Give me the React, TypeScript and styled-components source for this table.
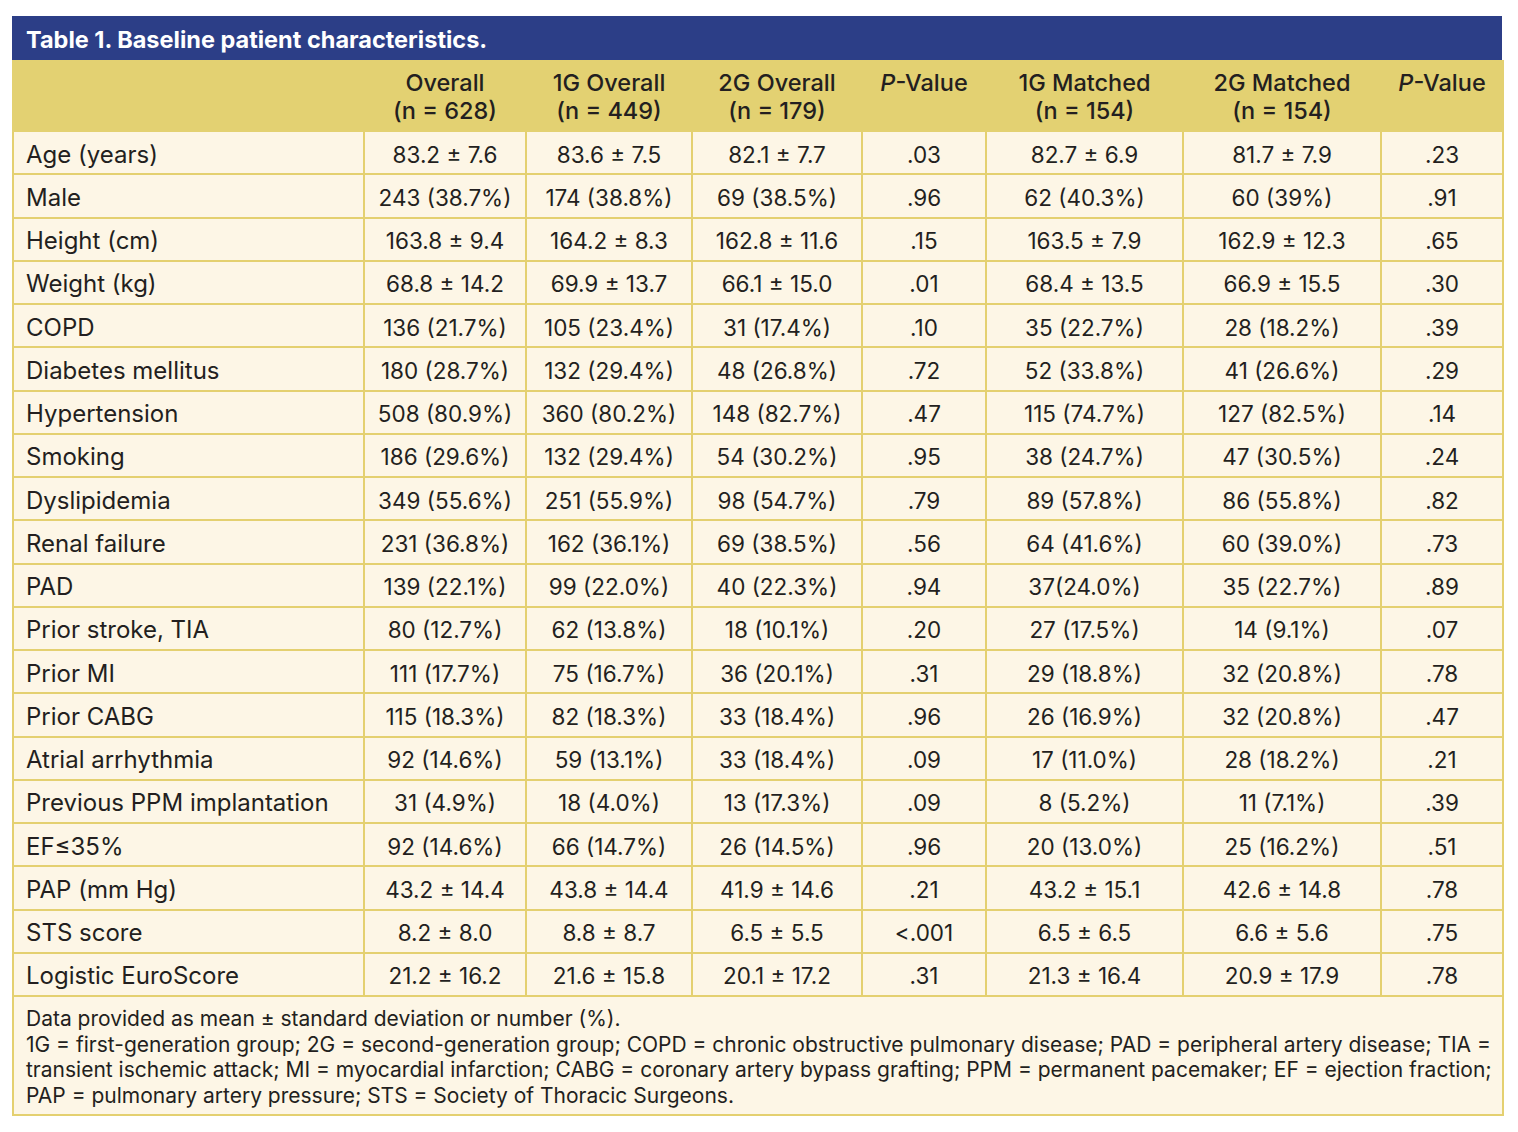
import React from 'react';
import styled, { createGlobalStyle } from 'styled-components';

const GlobalStyle = createGlobalStyle`
  body {
    margin: 0;
    background: #ffffff;
    font-family: Inter, Roboto, "Liberation Sans", sans-serif;
    color: #231f20;
  }
`;

const Page = styled.div`
  padding: 16px 16px 18px 12px;
`;

const Frame = styled.div`
  width: 1490px;
`;

const TitleBar = styled.div`
  height: 44px;
  background: #2c3e87;
  color: #ffffff;
  font-size: 23.5px;
  font-weight: 650;
  display: flex;
  align-items: center;
  padding: 3px 14px 0;
  box-sizing: border-box;
`;

const Table = styled.table`
  width: 100%;
  border-collapse: collapse;
  table-layout: fixed;
  background: #fdf6e6;
`;

const HeadCell = styled.th`
  background: #e3d172;
  height: 61px;
  padding: 9px 4px 0;
  font-size: 23.5px;
  font-weight: 500;
  line-height: 28px;
  text-align: center;
  vertical-align: top;
  white-space: nowrap;
  border: 2px solid #e3d172;
  border-top: none;
`;

const Cell = styled.td<{ $label?: boolean }>`
  height: 38.25px;
  padding: 3px ${(p) => (p.$label ? '12px' : '4px')} 0;
  font-size: ${(p) => (p.$label ? '24px' : '22.5px')};
  text-align: ${(p) => (p.$label ? 'left' : 'center')};
  white-space: nowrap;
  border: 2px solid #e4d070;
`;

const Notes = styled.td`
  border: 2px solid #e4d070;
  padding: 9px 12px 6px;
  font-size: 21px;
  line-height: 25.5px;
  white-space: nowrap;
`;

const cols = [351, 162, 166, 170, 124, 197, 198, 122];

const rows: string[][] = [
  ['Age (years)', '83.2 ± 7.6', '83.6 ± 7.5', '82.1 ± 7.7', '.03', '82.7 ± 6.9', '81.7 ± 7.9', '.23'],
  ['Male', '243 (38.7%)', '174 (38.8%)', '69 (38.5%)', '.96', '62 (40.3%)', '60 (39%)', '.91'],
  ['Height (cm)', '163.8 ± 9.4', '164.2 ± 8.3', '162.8 ± 11.6', '.15', '163.5 ± 7.9', '162.9 ± 12.3', '.65'],
  ['Weight (kg)', '68.8 ± 14.2', '69.9 ± 13.7', '66.1 ± 15.0', '.01', '68.4 ± 13.5', '66.9 ± 15.5', '.30'],
  ['COPD', '136 (21.7%)', '105 (23.4%)', '31 (17.4%)', '.10', '35 (22.7%)', '28 (18.2%)', '.39'],
  ['Diabetes mellitus', '180 (28.7%)', '132 (29.4%)', '48 (26.8%)', '.72', '52 (33.8%)', '41 (26.6%)', '.29'],
  ['Hypertension', '508 (80.9%)', '360 (80.2%)', '148 (82.7%)', '.47', '115 (74.7%)', '127 (82.5%)', '.14'],
  ['Smoking', '186 (29.6%)', '132 (29.4%)', '54 (30.2%)', '.95', '38 (24.7%)', '47 (30.5%)', '.24'],
  ['Dyslipidemia', '349 (55.6%)', '251 (55.9%)', '98 (54.7%)', '.79', '89 (57.8%)', '86 (55.8%)', '.82'],
  ['Renal failure', '231 (36.8%)', '162 (36.1%)', '69 (38.5%)', '.56', '64 (41.6%)', '60 (39.0%)', '.73'],
  ['PAD', '139 (22.1%)', '99 (22.0%)', '40 (22.3%)', '.94', '37(24.0%)', '35 (22.7%)', '.89'],
  ['Prior stroke, TIA', '80 (12.7%)', '62 (13.8%)', '18 (10.1%)', '.20', '27 (17.5%)', '14 (9.1%)', '.07'],
  ['Prior MI', '111 (17.7%)', '75 (16.7%)', '36 (20.1%)', '.31', '29 (18.8%)', '32 (20.8%)', '.78'],
  ['Prior CABG', '115 (18.3%)', '82 (18.3%)', '33 (18.4%)', '.96', '26 (16.9%)', '32 (20.8%)', '.47'],
  ['Atrial arrhythmia', '92 (14.6%)', '59 (13.1%)', '33 (18.4%)', '.09', '17 (11.0%)', '28 (18.2%)', '.21'],
  ['Previous PPM implantation', '31 (4.9%)', '18 (4.0%)', '13 (17.3%)', '.09', '8 (5.2%)', '11 (7.1%)', '.39'],
  ['EF≤35%', '92 (14.6%)', '66 (14.7%)', '26 (14.5%)', '.96', '20 (13.0%)', '25 (16.2%)', '.51'],
  ['PAP (mm Hg)', '43.2 ± 14.4', '43.8 ± 14.4', '41.9 ± 14.6', '.21', '43.2 ± 15.1', '42.6 ± 14.8', '.78'],
  ['STS score', '8.2 ± 8.0', '8.8 ± 8.7', '6.5 ± 5.5', '<.001', '6.5 ± 6.5', '6.6 ± 5.6', '.75'],
  ['Logistic EuroScore', '21.2 ± 16.2', '21.6 ± 15.8', '20.1 ± 17.2', '.31', '21.3 ± 16.4', '20.9 ± 17.9', '.78'],
];

const notes = [
  'Data provided as mean ± standard deviation or number (%).',
  '1G = first-generation group; 2G = second-generation group; COPD = chronic obstructive pulmonary disease; PAD = peripheral artery disease; TIA =',
  'transient ischemic attack; MI = myocardial infarction; CABG = coronary artery bypass grafting; PPM = permanent pacemaker; EF = ejection fraction;',
  'PAP = pulmonary artery pressure; STS = Society of Thoracic Surgeons.',
];

const PValue = () => (
  <>
    <i>P</i>-Value
  </>
);

const headers: React.ReactNode[] = [
  '',
  <>Overall<br />(n = 628)</>,
  <>1G Overall<br />(n = 449)</>,
  <>2G Overall<br />(n = 179)</>,
  <PValue />,
  <>1G Matched<br />(n = 154)</>,
  <>2G Matched<br />(n = 154)</>,
  <PValue />,
];

export default function App() {
  return (
    <Page>
      <GlobalStyle />
      <Frame>
        <TitleBar>Table 1. Baseline patient characteristics.</TitleBar>
        <Table>
          <colgroup>
            {cols.map((w, i) => (
              <col key={i} style={{ width: w }} />
            ))}
          </colgroup>
          <thead>
            <tr>
              {headers.map((h, i) => (
                <HeadCell key={i}>{h}</HeadCell>
              ))}
            </tr>
          </thead>
          <tbody>
            {rows.map((r) => (
              <tr key={r[0]}>
                {r.map((c, i) => (
                  <Cell key={i} $label={i === 0}>{c}</Cell>
                ))}
              </tr>
            ))}
            <tr>
              <Notes colSpan={8}>
                {notes.map((line, i) => (
                  <React.Fragment key={i}>
                    {i > 0 && <br />}
                    {line}
                  </React.Fragment>
                ))}
              </Notes>
            </tr>
          </tbody>
        </Table>
      </Frame>
    </Page>
  );
}
